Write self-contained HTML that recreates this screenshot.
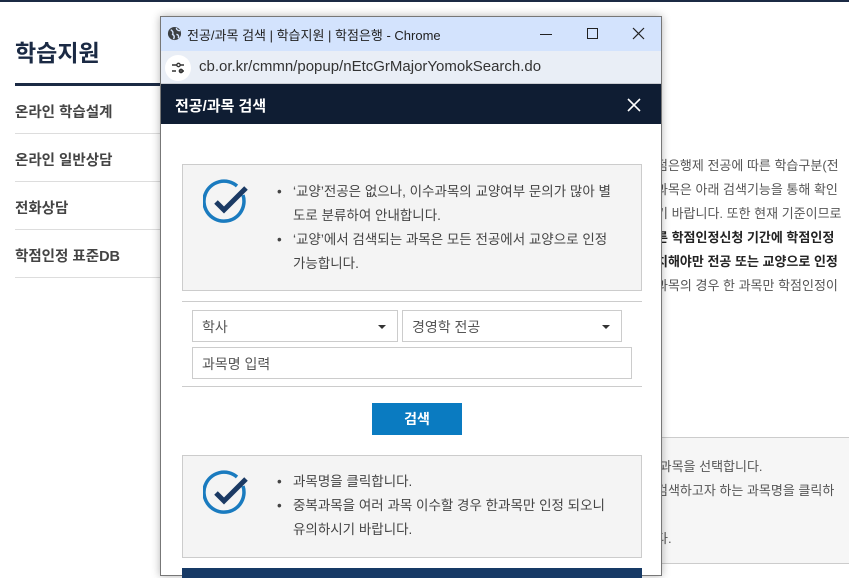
<!DOCTYPE html>
<html><head><meta charset="utf-8">
<style>
*{margin:0;padding:0;box-sizing:border-box}
body{width:849px;height:571px;overflow:hidden;background:#fff;font-family:"Liberation Sans","Noto Sans CJK KR",sans-serif;position:relative;color:#333}
.abs{position:absolute}
.topline{left:0;top:0;width:849px;height:2px;background:#1b2a44}
.st{left:15px;top:34px;font-size:23px;font-weight:bold;color:#1b2a44}
.sline{left:15px;top:83px;width:150px;height:3px;background:#1b2a44}
.mi{left:15px;font-size:14.5px;font-weight:bold;color:#444;}
.sep{left:15px;width:150px;height:1px;background:#ddd}
.rt{left:656px;font-size:13px;color:#555;white-space:nowrap}
.rt b{color:#222}
.gbox{left:640px;top:437px;width:220px;height:127px;background:#f6f6f6;border:1px solid #ccc}
.win{left:160px;top:16px;width:502px;height:560px;background:#fff;border:1px solid #777;box-shadow:0 0 8px rgba(0,0,0,.3)}
.tb{left:0;top:0;width:500px;height:34px;background:#d3e3fd;font-size:13px;color:#222}
.ab{left:0;top:34px;width:500px;height:33px;background:#e9eef6;border-bottom:1px solid #c9ccd2}
.hd{left:0;top:67px;width:500px;height:40px;background:#0f1d33;color:#fff;font-weight:bold;font-size:15px}
.ibox{background:#f4f4f4;border:1px solid #ccc}
.li{font-size:13.5px;color:#444;line-height:24px;position:relative;padding-left:18px}
.li:before{content:"•";position:absolute;left:2px}
.sel{border:1px solid #ccc;height:32px;font-size:14px;color:#555;padding:6px 9px;background:#fff}
.dd:after{content:"";position:absolute;right:11px;top:14px;border-left:4px solid transparent;border-right:4px solid transparent;border-top:4px solid #333}
</style></head><body>
<div class="abs topline"></div>
<div class="abs st">학습지원</div>
<div class="abs sline"></div>
<div class="abs mi" style="top:101px">온라인 학습설계</div>
<div class="abs sep" style="top:133px"></div>
<div class="abs mi" style="top:149px">온라인 일반상담</div>
<div class="abs sep" style="top:181px"></div>
<div class="abs mi" style="top:197px">전화상담</div>
<div class="abs sep" style="top:229px"></div>
<div class="abs mi" style="top:245px">학점인정 표준DB</div>
<div class="abs sep" style="top:277px"></div>

<div class="abs rt" style="top:155px">점은행제 전공에 따른 학습구분(전</div>
<div class="abs rt" style="top:179px">과목은 아래 검색기능을 통해 확인</div>
<div class="abs rt" style="top:203px">기 바랍니다. 또한 현재 기준이므로</div>
<div class="abs rt" style="top:227px"><b>른 학점인정신청 기간에 학점인정</b></div>
<div class="abs rt" style="top:251px"><b>치해야만 전공 또는 교양으로 인정</b></div>
<div class="abs rt" style="top:275px">과목의 경우 한 과목만 학점인정이</div>
<div class="abs gbox"></div>
<div class="abs rt" style="top:456px">/과목을 선택합니다.</div>
<div class="abs rt" style="top:480px">검색하고자 하는 과목명을 클릭하</div>
<div class="abs rt" style="top:528px">다.</div>

<div class="abs win">
 <div class="abs tb">
  <svg class="abs" style="left:6px;top:9px" width="15" height="15" viewBox="0 0 16 16"><circle cx="8" cy="8" r="7" fill="#3c4043"/><path d="M4 4 C6 5 7 7 6 9 C8 10 8 12 7 14 M10 2 C10 4 12 5 14 5 M10 9 C12 9 13 11 12 13" stroke="#d3e3fd" stroke-width="1.5" fill="none"/></svg>
  <span class="abs" style="left:26px;top:8px">전공/과목 검색 | 학습지원 | 학점은행 - Chrome</span>
  <div class="abs" style="left:379px;top:17px;width:12px;height:1px;background:#222"></div>
  <div class="abs" style="left:426px;top:11px;width:11px;height:11px;border:1px solid #222"></div>
  <svg class="abs" style="left:471px;top:10px" width="13" height="13"><path d="M1 1L12 12M12 1L1 12" stroke="#222" stroke-width="1.2"/></svg>
 </div>
 <div class="abs ab">
  <div class="abs" style="left:4px;top:4px;width:26px;height:26px;border-radius:13px;background:#fff"></div>
  <svg class="abs" style="left:10px;top:11px" width="14" height="12"><path d="M1 3H6M9 3H13M1 9H5M8 9H13" stroke="#333" stroke-width="1.6"/><circle cx="7.5" cy="3" r="1.7" fill="none" stroke="#333" stroke-width="1.3"/><circle cx="10" cy="9" r="1.7" fill="none" stroke="#333" stroke-width="1.3"/></svg>
  <span class="abs" style="left:38px;top:7px;font-size:15px;color:#333">cb.or.kr/cmmn/popup/nEtcGrMajorYomokSearch.do</span>
 </div>
 <div class="abs hd">
  <span class="abs" style="left:14px;top:11px">전공/과목 검색</span>
  <svg class="abs" style="left:466px;top:14px" width="14" height="14"><path d="M1 1L13 13M13 1L1 13" stroke="#fff" stroke-width="1.6"/></svg>
 </div>
 <div class="abs ibox" style="left:21px;top:147px;width:460px;height:127px">
  <svg class="abs" style="left:20px;top:14px" width="48" height="48" viewBox="0 0 48 48"><path d="M40 16 A20 20 0 1 1 34 7" fill="none" stroke="#1a7bbf" stroke-width="3.5"/><path d="M13 23L21 31L43 9" fill="none" stroke="#1b3a64" stroke-width="5"/></svg>
  <div class="abs" style="left:92px;top:15px;width:339px">
   <div class="li">‘교양’전공은 없으나, 이수과목의 교양여부 문의가 많아 별도로 분류하여 안내합니다.</div>
   <div class="li">‘교양’에서 검색되는 과목은 모든 전공에서 교양으로 인정 가능합니다.</div>
  </div>
 </div>
 <div class="abs" style="left:21px;top:284px;width:460px;height:1px;background:#ccc"></div>
 <div class="abs sel dd" style="left:31px;top:293px;width:206px">학사</div>
 <div class="abs sel dd" style="left:241px;top:293px;width:220px">경영학 전공</div>
 <div class="abs sel" style="left:31px;top:330px;width:440px">과목명 입력</div>
 <div class="abs" style="left:21px;top:369px;width:460px;height:1px;background:#ccc"></div>
 <div class="abs" style="left:211px;top:386px;width:90px;height:32px;background:#0a7bc1;color:#fff;font-size:14px;font-weight:bold;text-align:center;line-height:32px">검색</div>
 <div class="abs ibox" style="left:21px;top:438px;width:460px;height:103px">
  <svg class="abs" style="left:20px;top:14px" width="48" height="48" viewBox="0 0 48 48"><path d="M40 16 A20 20 0 1 1 34 7" fill="none" stroke="#1a7bbf" stroke-width="3.5"/><path d="M13 23L21 31L43 9" fill="none" stroke="#1b3a64" stroke-width="5"/></svg>
  <div class="abs" style="left:92px;top:14px;width:339px">
   <div class="li">과목명을 클릭합니다.</div>
   <div class="li">중복과목을 여러 과목 이수할 경우 한과목만 인정 되오니 유의하시기 바랍니다.</div>
  </div>
 </div>
 <div class="abs" style="left:21px;top:551px;width:460px;height:10px;background:#173a66"></div>
</div>
</body></html>
